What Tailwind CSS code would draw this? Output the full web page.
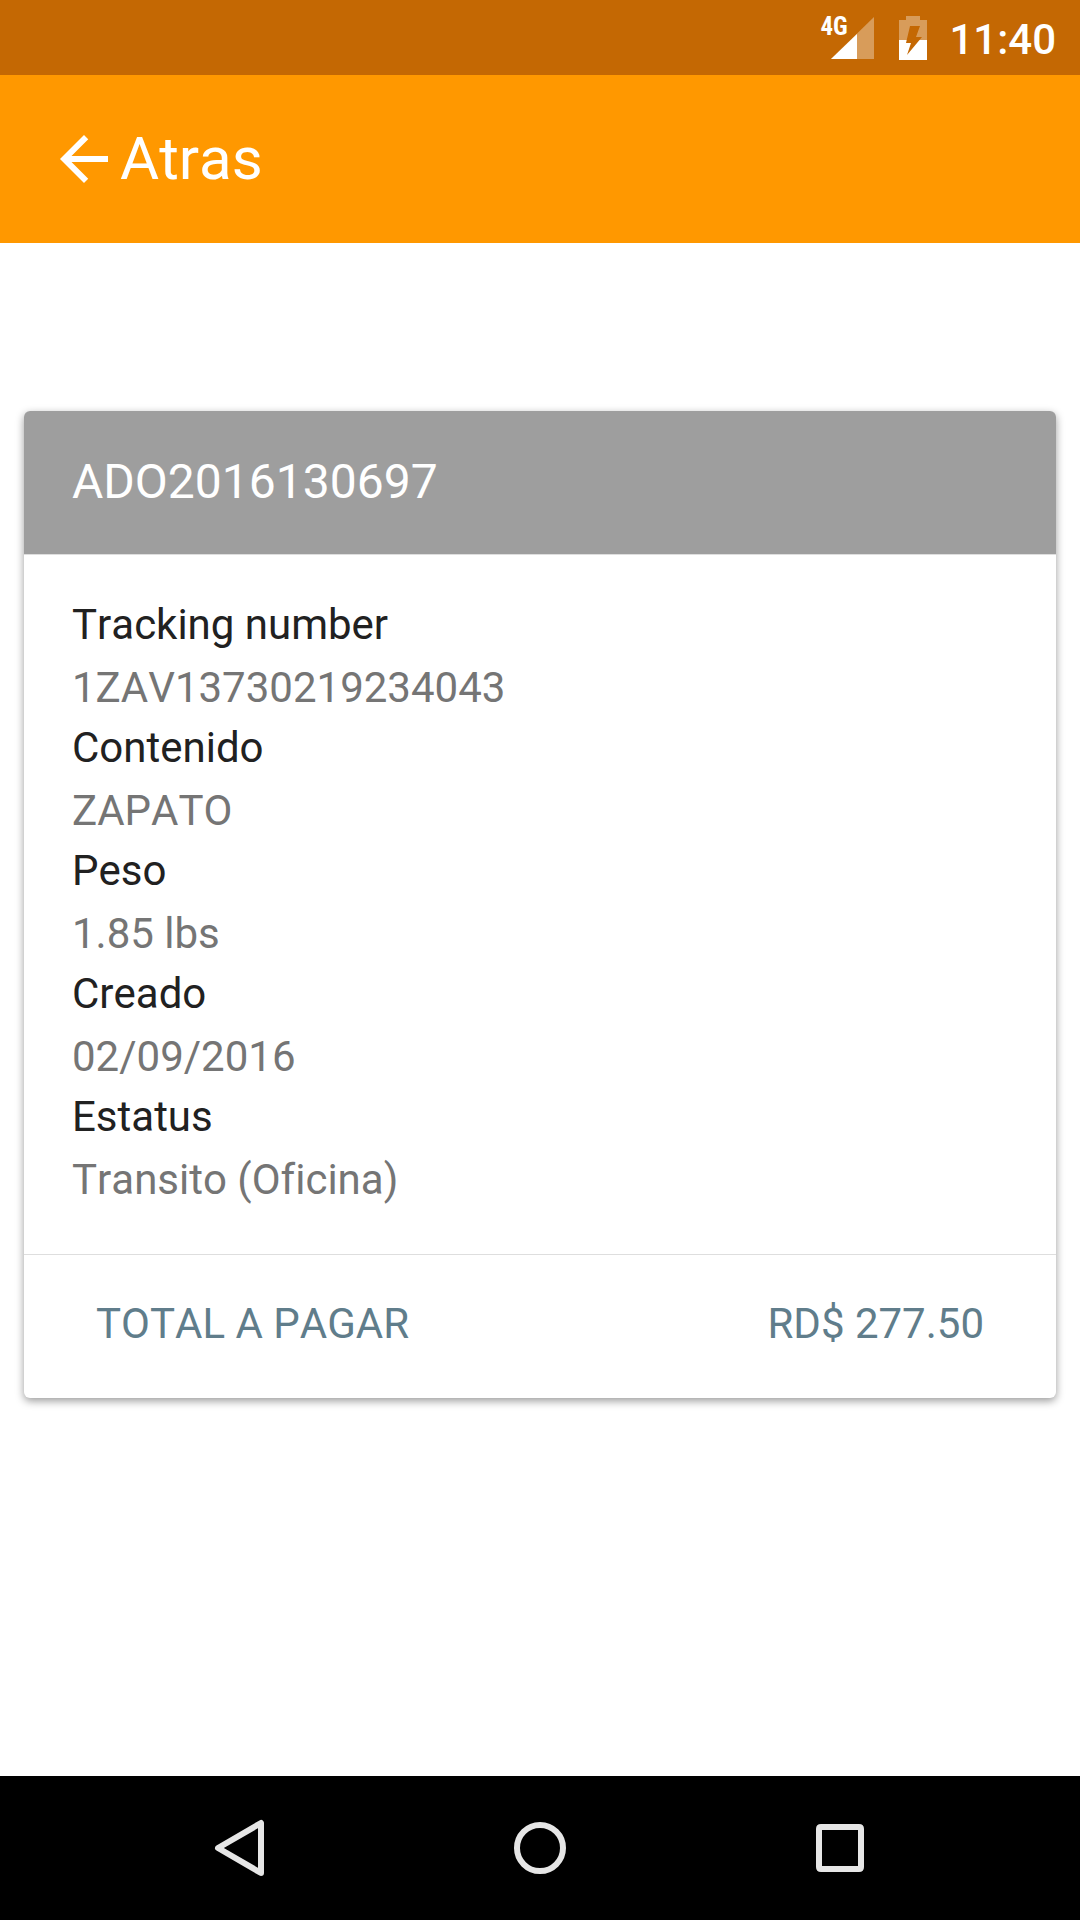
<!DOCTYPE html>
<html lang="es">
<head>
  <meta charset="UTF-8">
  <meta name="viewport" content="width=device-width, initial-scale=1.0">
  <title>Atras</title>
  <script src="https://cdn.jsdelivr.net/npm/@tailwindcss/browser@4"></script>
</head>
<body class="flex flex-col min-h-screen bg-white font-[Roboto,sans-serif] [font-kerning:none] [font-variant-ligatures:none] text-[42px] leading-[60px] text-[#212121]">

  <!-- Status bar -->
  <div class="flex items-center justify-end h-[75px] px-6 bg-[#c46803] text-white">
    <div class="relative mr-6">
      <svg class="w-[43px] h-11" viewBox="0 0 43 44" fill="currentColor" aria-hidden="true">
        <path d="M43 1V43H0z" opacity=".35"/>
        <path d="M26 18V43H0z"/>
      </svg>
      <span class="absolute -left-[11px] top-0 text-[25px] leading-[22px] font-bold font-['Roboto_Condensed','Liberation_Sans_Narrow',Roboto,sans-serif]">4G</span>
    </div>
    <svg class="w-[30px] h-11 mr-[21px]" viewBox="0 0 30 44" aria-hidden="true">
      <mask id="bolt">
        <path d="M0 0H30V44H0z" fill="#fff"/>
        <path d="M12 10H22L18 21H24L9 39L13 27H8z" fill="#000"/>
      </mask>
      <g fill="currentColor" mask="url(#bolt)">
        <path d="M8 0H22V4H29V24H1V4H8z" opacity=".35"/>
        <path d="M1 24H29V44H1z"/>
      </g>
    </svg>
    <time class="pt-1 font-medium">11:40</time>
  </div>

  <!-- Header -->
  <header class="flex items-center h-[168px] px-12 bg-[#ff9800] text-white">
    <button type="button" class="flex items-center text-[60px] leading-[72px]">
      <svg class="w-18 h-18" viewBox="0 0 24 24" fill="currentColor" aria-hidden="true">
        <path d="M20 11H7.83l5.59-5.59L12 4l-8 8 8 8 1.41-1.41L7.83 13H20v-2z"/>
      </svg>
      Atras
    </button>
  </header>

  <!-- Package details -->
  <main class="flex-1 px-6 pt-42">
    <section class="rounded-md overflow-hidden bg-white shadow-[0_3px_8px_rgba(0,0,0,0.4)]">
      <h1 class="px-12 pt-[39px] pb-10 border-b border-[#dedede] bg-[#9e9e9e] text-[48px] leading-[64px] text-white">ADO2016130697</h1>
      <dl class="px-12 pt-10 pb-11">
        <dt>Tracking number</dt>
        <dd class="mt-[3px] text-[#757575]">1ZAV13730219234043</dd>
        <dt>Contenido</dt>
        <dd class="mt-[3px] text-[#757575]">ZAPATO</dd>
        <dt>Peso</dt>
        <dd class="mt-[3px] text-[#757575]">1.85 lbs</dd>
        <dt>Creado</dt>
        <dd class="mt-[3px] text-[#757575]">02/09/2016</dd>
        <dt>Estatus</dt>
        <dd class="mt-[3px] text-[#757575]">Transito (Oficina)</dd>
      </dl>
      <div class="flex justify-between px-18 pt-[39px] pb-11 border-t border-[#dedede] text-[#607d8b]">
        <span>TOTAL A PAGAR</span>
        <span>RD$ 277.50</span>
      </div>
    </section>
  </main>

  <!-- Navigation bar -->
  <nav class="grid grid-cols-3 h-36 px-[90px] bg-black text-[#e6e6e6]">
    <button type="button" aria-label="Back" class="flex items-center justify-center">
      <svg class="w-18 h-18" viewBox="0 0 72 72" fill="none" stroke="currentColor" stroke-width="6" stroke-linejoin="round" aria-hidden="true">
        <path d="M57 11V61L14 36z"/>
      </svg>
    </button>
    <button type="button" aria-label="Home" class="flex items-center justify-center">
      <svg class="w-18 h-18" viewBox="0 0 72 72" fill="none" stroke="currentColor" stroke-width="6" aria-hidden="true">
        <circle cx="36" cy="36" r="23"/>
      </svg>
    </button>
    <button type="button" aria-label="Recents" class="flex items-center justify-center">
      <svg class="w-18 h-18" viewBox="0 0 72 72" fill="currentColor" fill-rule="evenodd" aria-hidden="true">
        <path d="M17 12H55Q60 12 60 17V55Q60 60 55 60H17Q12 60 12 55V17Q12 12 17 12zM18 18V54H54V18z"/>
      </svg>
    </button>
  </nav>
</body>
</html>
